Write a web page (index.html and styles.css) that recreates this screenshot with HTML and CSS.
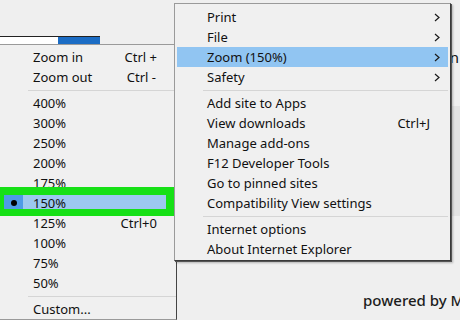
FILE: index.html
```html
<!DOCTYPE html>
<html lang="en">

<head>
    <meta charset="UTF-8">
    <meta name="viewport" content="width=device-width, initial-scale=1.0">
    <title>Tools menu</title>
    <link rel="stylesheet" href="styles.css">
</head>

<body>
    <div id="pagina">
        <div id="barra-topo"></div>
        <div id="progresso"><span class="preenchido"></span></div>
        <div id="conteudo">
            <span class="entrar">Sign in</span>
            <div class="painel-lado"></div>
        </div>
        <p id="rodape">powered by MSN</p>
    </div>

    <div id="menu-zoom" class="menu">
        <div class="item"><span>Zoom in</span><span class="atalho">Ctrl +</span></div>
        <div class="item"><span>Zoom out</span><span class="atalho atalho-menos">Ctrl -</span></div>
        <div class="separador"></div>
        <div class="item"><span>400%</span></div>
        <div class="item"><span>300%</span></div>
        <div class="item"><span>250%</span></div>
        <div class="item"><span>200%</span></div>
        <div class="item"><span>175%</span></div>
        <div class="item atual"><span class="marcador"></span><span>150%</span></div>
        <div class="item"><span>125%</span><span class="atalho">Ctrl+0</span></div>
        <div class="item"><span>100%</span></div>
        <div class="item"><span>75%</span></div>
        <div class="item"><span>50%</span></div>
        <div class="separador"></div>
        <div class="item"><span>Custom...</span></div>
    </div>

    <div id="menu-ferramentas" class="menu">
        <div class="item"><span>Print</span><svg class="seta" width="6" height="9" viewBox="0 0 6 9"><path d="M1 1 L5 4.5 L1 8" fill="none" stroke="#1a1a1a" stroke-width="1.2"/></svg></div>
        <div class="item"><span>File</span><svg class="seta" width="6" height="9" viewBox="0 0 6 9"><path d="M1 1 L5 4.5 L1 8" fill="none" stroke="#1a1a1a" stroke-width="1.2"/></svg></div>
        <div class="item ativo"><span>Zoom (150%)</span><svg class="seta" width="6" height="9" viewBox="0 0 6 9"><path d="M1 1 L5 4.5 L1 8" fill="none" stroke="#1a1a1a" stroke-width="1.2"/></svg></div>
        <div class="item"><span>Safety</span><svg class="seta" width="6" height="9" viewBox="0 0 6 9"><path d="M1 1 L5 4.5 L1 8" fill="none" stroke="#1a1a1a" stroke-width="1.2"/></svg></div>
        <div class="separador"></div>
        <div class="item"><span>Add site to Apps</span></div>
        <div class="item"><span>View downloads</span><span class="atalho">Ctrl+J</span></div>
        <div class="item"><span>Manage add-ons</span></div>
        <div class="item"><span>F12 Developer Tools</span></div>
        <div class="item"><span>Go to pinned sites</span></div>
        <div class="item"><span>Compatibility View settings</span></div>
        <div class="separador"></div>
        <div class="item"><span>Internet options</span></div>
        <div class="item"><span>About Internet Explorer</span></div>
    </div>
</body>

</html>
```

FILE: styles.css
```css
* {
    margin: 0px;
    padding: 0px;
    box-sizing: border-box;
}

body {
    width: 460px;
    height: 320px;
    overflow: hidden;
    position: relative;
    background-color: #efefef;
    font-family: "Noto Sans", "Open Sans", sans-serif;
    font-size: 13px;
    color: #111;
}

div#pagina {
    width: 100%;
    height: 100%;
}

div#barra-topo {
    height: 36px;
}

div#progresso {
    width: 100px;
    height: 8px;
    background-color: #ffffff;
    border-top: 1px solid #222;
    display: flex;
    justify-content: flex-end;
}

div#progresso .preenchido {
    width: 42px;
    height: 100%;
    background-color: #1b6cc4;
}

div#conteudo {
    display: flex;
    flex-direction: column;
    align-items: flex-end;
    padding-top: 4px;
}

div#conteudo .entrar {
    font-size: 15px;
    margin-right: 1px;
    line-height: 18px;
}

div#conteudo .painel-lado {
    width: 9px;
    height: 110px;
    margin-top: 40px;
    background-color: #e3e3e3;
}

p#rodape {
    margin-top: 74px;
    margin-left: 363px;
    white-space: nowrap;
    font-size: 15px;
    font-weight: 500;
    color: #1c1c1c;
}

.menu {
    position: absolute;
    background-color: #f0f0f0;
    border: 1px solid #9a9a9a;
}

.menu .item {
    height: 20px;
    display: flex;
    align-items: center;
    justify-content: space-between;
    white-space: nowrap;
}

.menu .separador {
    border-top: 1px solid #d5d5d5;
    margin-top: 3px;
    height: 3px;
}

/* menu principal (ferramentas) */
div#menu-ferramentas {
    left: 174px;
    top: 3px;
    width: 277px;
    padding: 3px 0px 1px 0px;
    border-right-color: #3a3a3a;
    border-bottom-color: #3a3a3a;
    box-shadow: 1px 1px 0px #555, 2px 2px 2px rgba(0, 0, 0, 0.25);
}

div#menu-ferramentas .item {
    margin: 0px 2px;
    padding-left: 30px;
    padding-right: 8px;
}

div#menu-ferramentas .item.ativo {
    background-color: #91c5f2;
}

div#menu-ferramentas .atalho {
    margin-right: 10px;
}

div#menu-ferramentas .separador {
    margin-left: 28px;
    margin-right: 2px;
}

/* submenu de zoom */
div#menu-zoom {
    left: -1px;
    top: 44px;
    width: 178px;
    padding-top: 2px;
    border-right-color: #444;
}

div#menu-zoom .item {
    padding-left: 33px;
    padding-right: 19px;
}

div#menu-zoom .atalho-menos {
    margin-right: 1px;
}

div#menu-zoom .separador {
    margin-left: 28px;
}

div#menu-zoom .item.atual {
    position: relative;
    justify-content: flex-start;
    padding-left: 0px;
    background: linear-gradient(to right, #4f9be6 0px, #4f9be6 23px, #9cc8f0 23px);
}

div#menu-zoom .item.atual .marcador {
    width: 6px;
    height: 6px;
    margin-left: 11px;
    margin-right: 16px;
    border-radius: 50%;
    background-color: #000;
}

div#menu-zoom .item.atual::after {
    content: "";
    position: absolute;
    left: 0px;
    right: 1px;
    top: -6px;
    bottom: -3px;
    border-style: solid;
    border-color: #16e016;
    border-width: 8px 9px 7px 4px;
}
```
